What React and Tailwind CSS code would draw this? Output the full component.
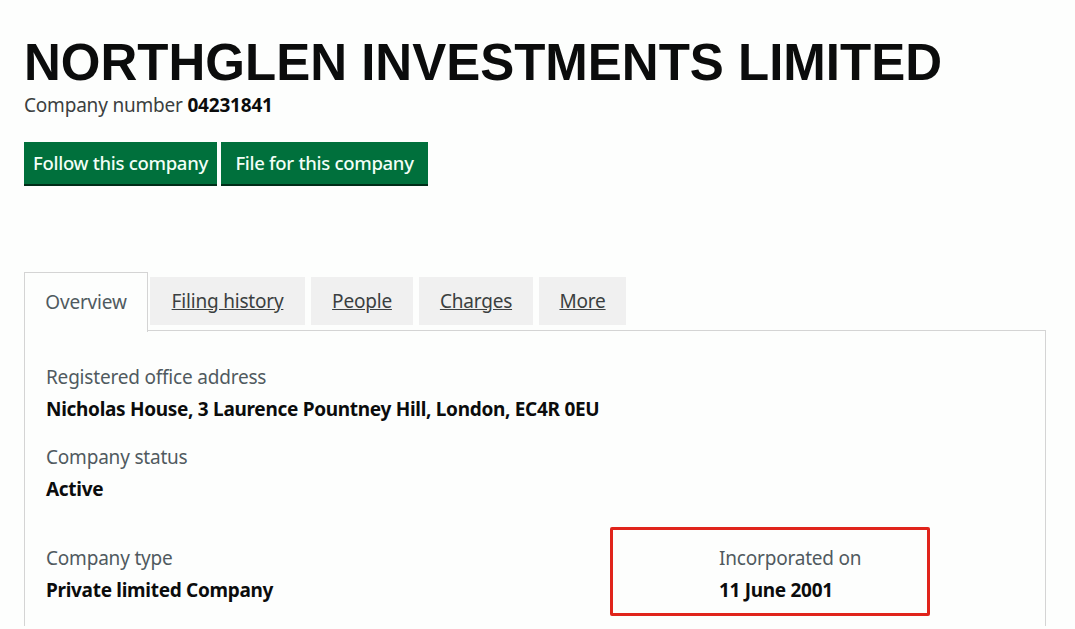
import React from 'react';

const tabs = [
  { name: 'Filing history', w: 'w-[155px]' },
  { name: 'People', w: 'w-[102px]' },
  { name: 'Charges', w: 'w-[114px]' },
  { name: 'More', w: 'w-[87px]' },
];

const Field = ({ label, value, className = '' }) => (
  <div className={className}>
    <p className="text-[19px] leading-[24px] text-[#505a5f] tracking-[-0.2px]">{label}</p>
    <p className="mt-[8px] text-[19px] leading-[24px] font-bold text-[#0b0c0c] tracking-[-0.3px]">{value}</p>
  </div>
);

const App = () => {
  return (
    <div className="min-h-[629px] bg-[#fdfefd] pl-[24px] pt-[36px] font-['Noto_Sans',sans-serif] overflow-hidden">
      <h1 className="font-['Liberation_Sans',Arial,sans-serif] font-bold text-[51px] leading-[54px] text-[#0b0c0c]">
        NORTHGLEN INVESTMENTS LIMITED
      </h1>
      <p className="mt-[4px] text-[19px] leading-[22px] text-[#3b3f40] tracking-[-0.2px]">
        Company number <span className="font-bold text-[#0b0c0c]">04231841</span>
      </p>

      <div className="mt-[26px] flex gap-[4px]">
        <button className="h-[44px] w-[193px] bg-[#00703c] text-[#f2fff7] text-[18.5px] font-medium tracking-[-0.3px] border-b-2 border-[#002d18]">
          Follow this company
        </button>
        <button className="h-[44px] w-[207px] bg-[#00703c] text-[#f2fff7] text-[18.5px] font-medium tracking-[-0.3px] border-b-2 border-[#002d18]">
          File for this company
        </button>
      </div>

      <div className="mt-[86px] w-[1022px]">
        <div className="flex items-end">
          <div className="w-[124px] h-[60px] border border-b-0 border-[#d4d4d4] bg-[#fdfefd] flex items-center justify-center text-[19px] text-[#505a5f] tracking-[-0.2px] relative z-10 -mb-px">
            Overview
          </div>
          <div className="flex gap-[6px] pl-[2px] border-b border-[#d4d4d4] flex-1 pb-[5px]">
            {tabs.map((t) => (
              <div
                key={t.name}
                className={`${t.w} h-[48px] bg-[#f0f0f0] flex items-center justify-center text-[19px] text-[#3b3f40] underline tracking-[-0.2px]`}
              >
                {t.name}
              </div>
            ))}
          </div>
        </div>
        <div className="border-l border-r border-[#d4d4d4] pl-[21px] pt-[34px] pb-[10px]">
          <Field label="Registered office address" value="Nicholas House, 3 Laurence Pountney Hill, London, EC4R 0EU" />
          <Field label="Company status" value="Active" className="mt-[24px]" />
          <div className="mt-[26px] flex items-start">
            <Field label="Company type" value="Private limited Company" className="w-[564px] pt-[19px]" />
            <div className="w-[320px] h-[89px] border-[3px] border-[#e0241b] rounded-[2px] pl-[106px] pt-[16px]">
              <p className="text-[19px] leading-[24px] text-[#505a5f] tracking-[-0.2px]">Incorporated on</p>
              <p className="mt-[8px] text-[19px] leading-[24px] font-bold text-[#0b0c0c] tracking-[-0.3px]">11 June 2001</p>
            </div>
          </div>
        </div>
      </div>
    </div>
  );
};

export default App;
